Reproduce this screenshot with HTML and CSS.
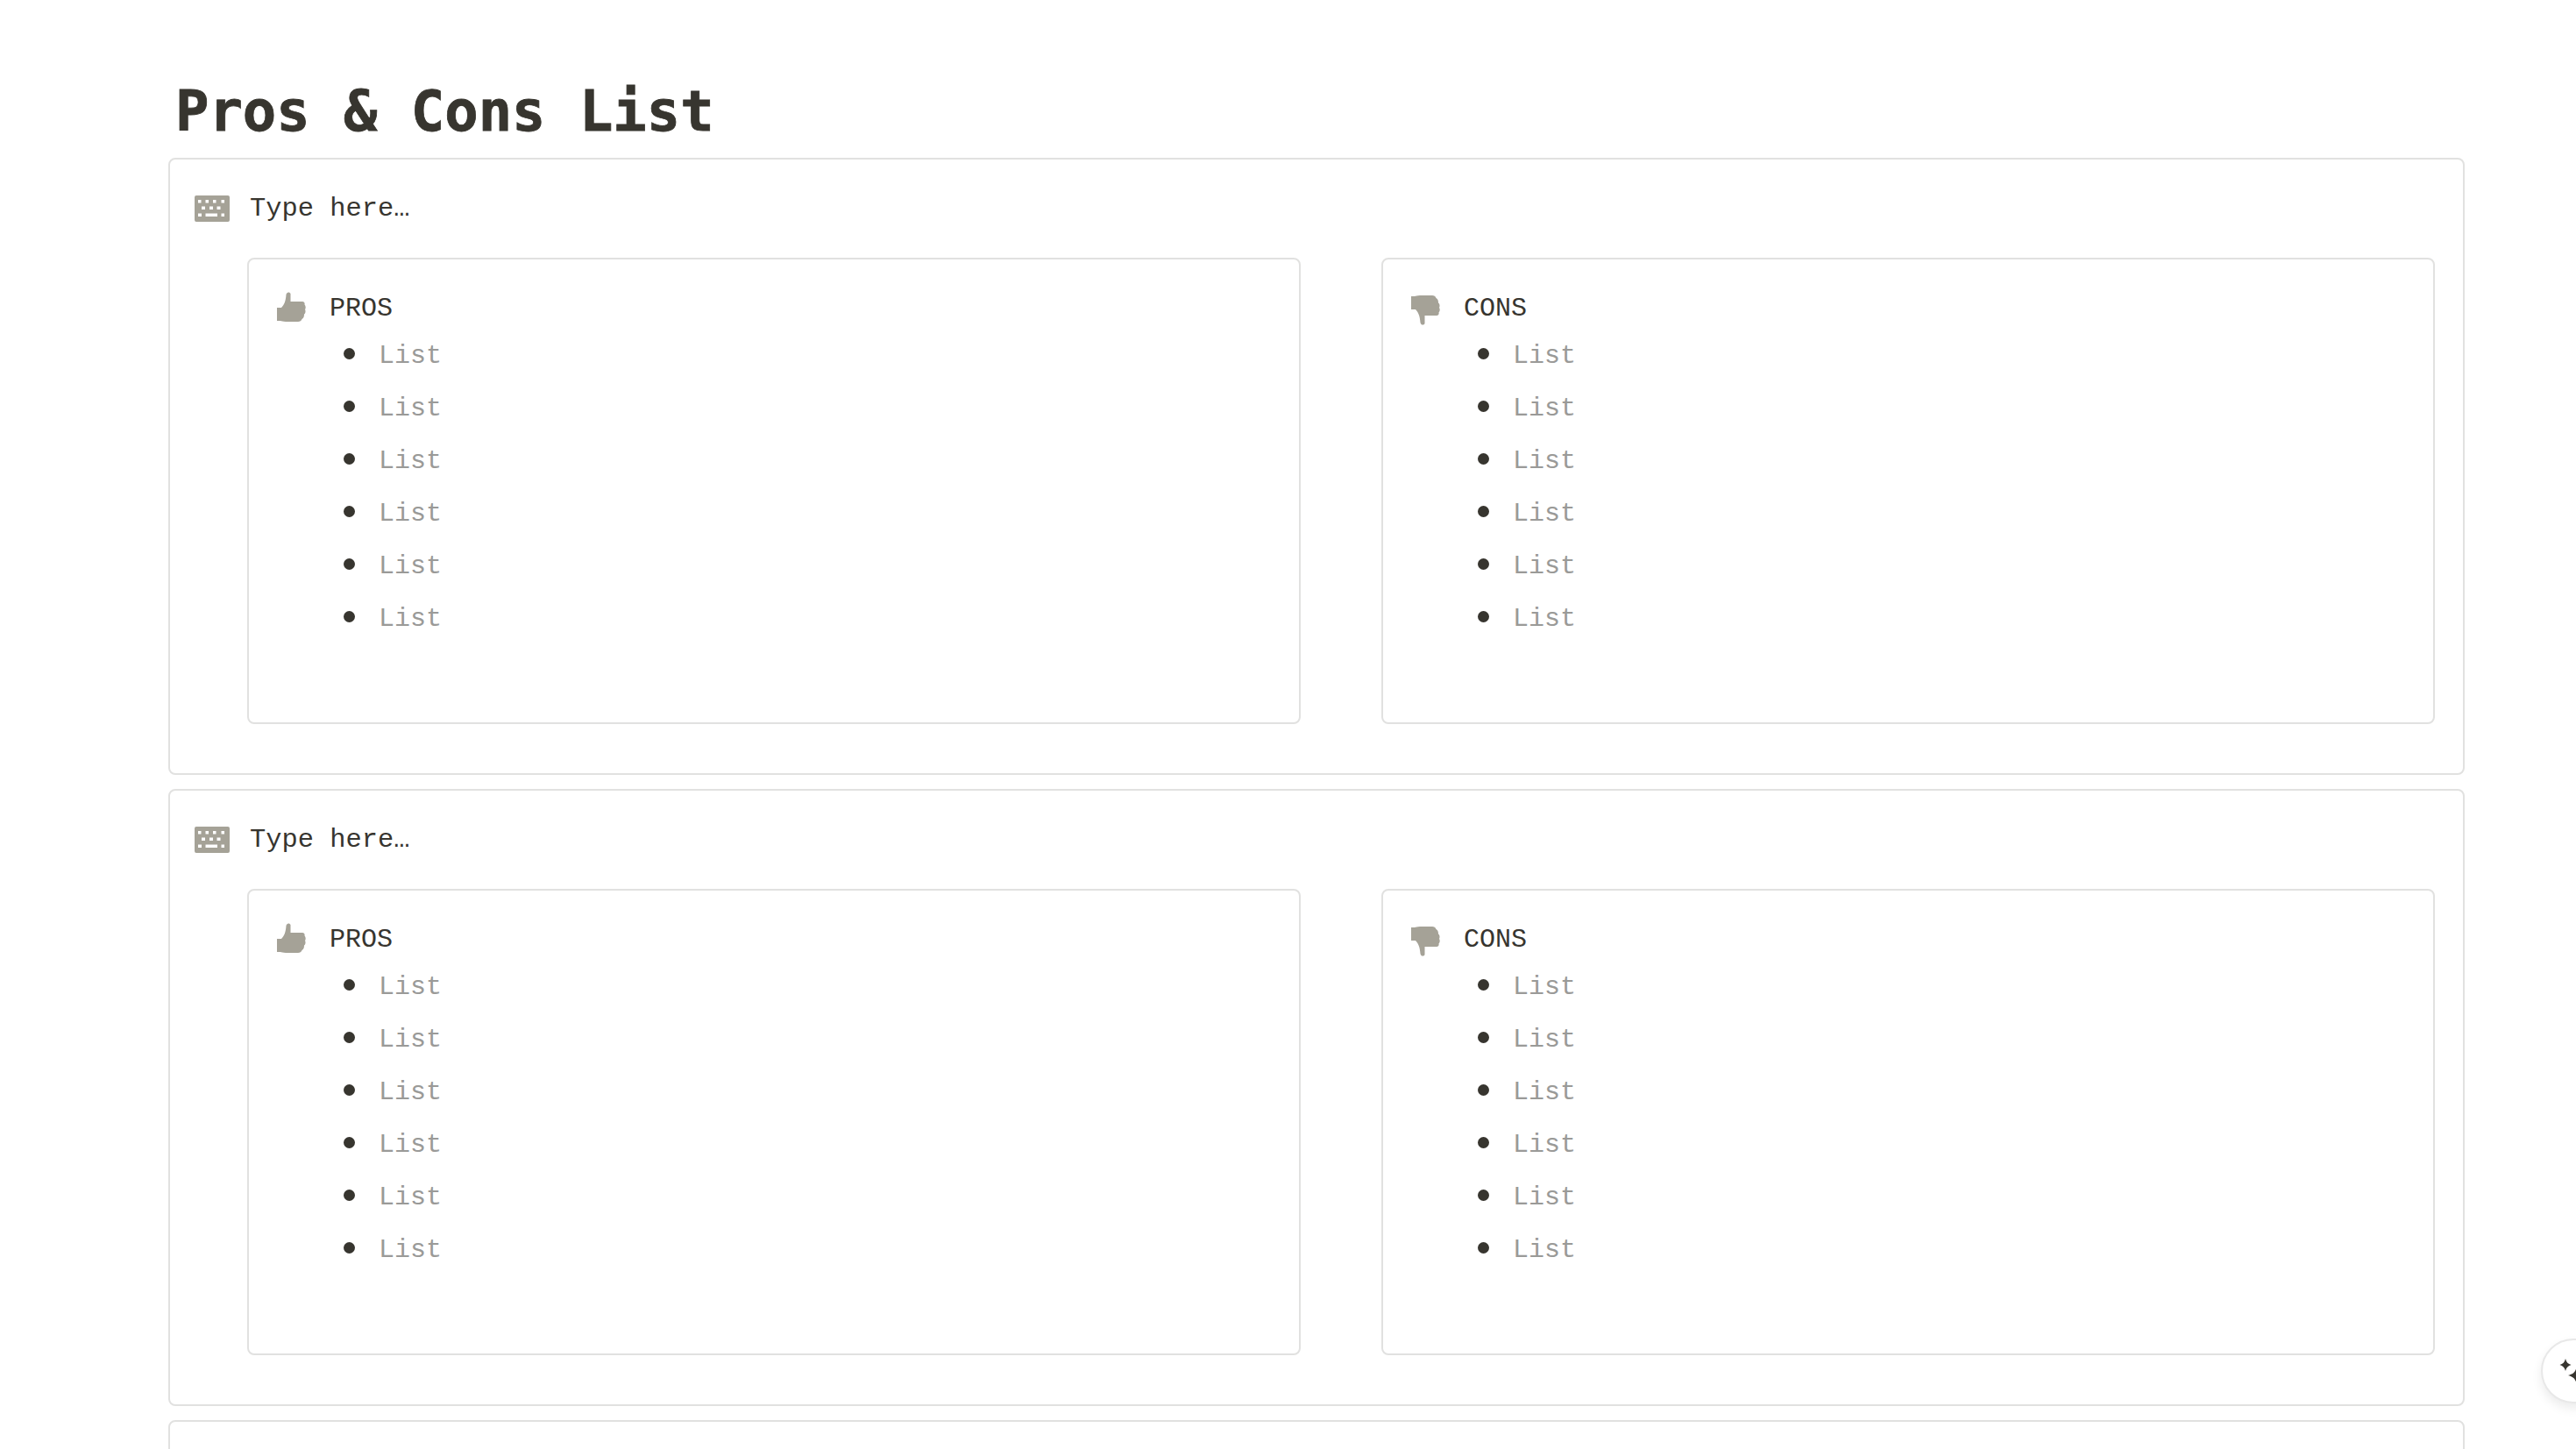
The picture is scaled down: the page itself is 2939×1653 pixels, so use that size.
FILE: index.html
```html
<!DOCTYPE html>
<html lang="en">
<head>
<meta charset="utf-8">
<title>Pros &amp; Cons List</title>
<link rel="stylesheet" href="styles.css">
</head>
<body>
  <svg width="0" height="0" class="defs">
    <defs>
      <symbol id="kbd" viewBox="0 0 40 30">
        <path fill-rule="evenodd" d="M2 0h36a2 2 0 0 1 2 2v26a2 2 0 0 1-2 2H2a2 2 0 0 1-2-2V2a2 2 0 0 1 2-2zM4 5v3.500h3.500V5zm8.500 0v3.500H16V5zM21 5v3.500h3.500V5zm9.500 0v3.500H34V5zM8 12.500V16h4v-3.500zm9 0V16h4v-3.500zm8.500 0V16h4v-3.500zM4 20.500V24h4v-3.500zm8.500 0V24H26v-3.500zm18 0V24H34v-3.500z"/>
      </symbol>
      <symbol id="up" viewBox="0 0 33 35">
        <path d="M0 18H5C8 15 10 11 10.500 3C11 0 14.500-.5 15.500 2V11H29C31 11 32 12.500 31.500 14.500C33 16 33 19 32 20C33 22 32.500 24.500 31 25.500C31 28 30.500 30 28.500 31C28 33 26 34 24 34H10C7 34 5 33 4 33H0Z"/>
      </symbol>
      <symbol id="down" viewBox="0 0 33 35">
        <path transform="matrix(1 0 0 -1 0 35)" d="M0 18H5C8 15 10 11 10.500 3C11 0 14.500-.5 15.500 2V11H29C31 11 32 12.500 31.500 14.500C33 16 33 19 32 20C33 22 32.500 24.500 31 25.500C31 28 30.500 30 28.500 31C28 33 26 34 24 34H10C7 34 5 33 4 33H0Z"/>
      </symbol>
    </defs>
  </svg>

  <main class="page">
    <h1 class="title">Pros &amp; Cons List</h1>

    <section class="block">
      <div class="prompt"><svg class="icon kbd"><use href="#kbd"/></svg><span>Type here…</span></div>
      <div class="columns">
        <div class="card">
          <div class="head"><svg class="icon hand"><use href="#up"/></svg><span>PROS</span></div>
          <ul class="list"><li>List</li><li>List</li><li>List</li><li>List</li><li>List</li><li>List</li></ul>
        </div>
        <div class="card">
          <div class="head"><svg class="icon hand hand-down"><use href="#down"/></svg><span>CONS</span></div>
          <ul class="list"><li>List</li><li>List</li><li>List</li><li>List</li><li>List</li><li>List</li></ul>
        </div>
      </div>
    </section>

    <section class="block">
      <div class="prompt"><svg class="icon kbd"><use href="#kbd"/></svg><span>Type here…</span></div>
      <div class="columns">
        <div class="card">
          <div class="head"><svg class="icon hand"><use href="#up"/></svg><span>PROS</span></div>
          <ul class="list"><li>List</li><li>List</li><li>List</li><li>List</li><li>List</li><li>List</li></ul>
        </div>
        <div class="card">
          <div class="head"><svg class="icon hand hand-down"><use href="#down"/></svg><span>CONS</span></div>
          <ul class="list"><li>List</li><li>List</li><li>List</li><li>List</li><li>List</li><li>List</li></ul>
        </div>
      </div>
    </section>

    <section class="block"></section>
  </main>

  <button class="assist" aria-label="AI">
    <svg width="70" height="70" viewBox="2 2 70 70">
      <path d="M28 23C29 27 31 29 34.500 30C31 31 29 33 28 37C27 33 25 31 21.500 30C25 29 27 27 28 23Z"/>
      <path d="M41 31C42.500 38 44.500 40 51 42C44.500 44 42.500 46 41 53C39.500 46 37.500 44 31 42C37.500 40 39.500 38 41 31Z"/>
    </svg>
  </button>
</body>
</html>
```

FILE: styles.css
```css
html, body {
  margin: 0;
  height: 1653px;
  overflow: hidden;
  background: #fff;
}
body {
  position: relative;
  font-family: "Liberation Mono", "DejaVu Sans Mono", monospace;
  color: #37352f;
}
.defs { position: absolute; }
.page {
  display: flex;
  flex-direction: column;
  gap: 16px;
  padding: 0 127px 0 192px;
}
.title {
  margin: 0 0 1px;
  padding: 91px 0 0 8px;
  height: 72px;
  font-family: "DejaVu Sans Mono", "Liberation Mono", monospace;
  font-size: 63.8px;
  line-height: 72px;
  font-weight: 700;
  -webkit-text-stroke: 0.8px #37352f;
  color: #37352f;
}
.block {
  box-sizing: border-box;
  height: 704px;
  flex: none;
  border: 2px solid #e1e1e0;
  border-radius: 8px;
  padding: 28px 32px 0 28px;
}
.prompt {
  display: flex;
  align-items: center;
  gap: 23px;
  height: 56px;
  font-size: 30.4px;
  line-height: 56px;
}
.icon { fill: #a5a297; flex: none; }
.kbd { width: 40px; height: 30px; }
.columns {
  display: grid;
  grid-template-columns: 1fr 1fr;
  gap: 92px;
  margin-top: 28px;
  padding-left: 60px;
}
.card {
  box-sizing: border-box;
  height: 532px;
  border: 2px solid #e1e1e0;
  border-radius: 8px;
  padding: 29px 32px 0;
}
.head {
  display: flex;
  align-items: center;
  gap: 27px;
  height: 54px;
  font-size: 30px;
  line-height: 54px;
}
.hand { width: 33px; height: 35px; margin-bottom: 3px; }
.hand-down { margin-bottom: 0; margin-top: 2px; }
.list {
  margin: -3px 0 0;
  padding: 0 0 0 116px;
  list-style: none;
}
.list li {
  position: relative;
  height: 60px;
  font-size: 30px;
  line-height: 60px;
  color: #9a9a98;
}
.list li::before {
  content: "";
  position: absolute;
  left: -40px;
  top: 21px;
  width: 13px;
  height: 13px;
  border-radius: 50%;
  background: #37352f;
}
.assist {
  position: absolute;
  left: 2899px;
  top: 1527px;
  width: 74px;
  height: 74px;
  padding: 0;
  border: 2px solid #e8e8e8;
  border-radius: 50%;
  background: #fff;
  box-shadow: 0 6px 12px rgba(0, 0, 0, 0.08);
  display: flex;
  align-items: center;
}
.assist svg { fill: #37352f; flex: none; }
```
